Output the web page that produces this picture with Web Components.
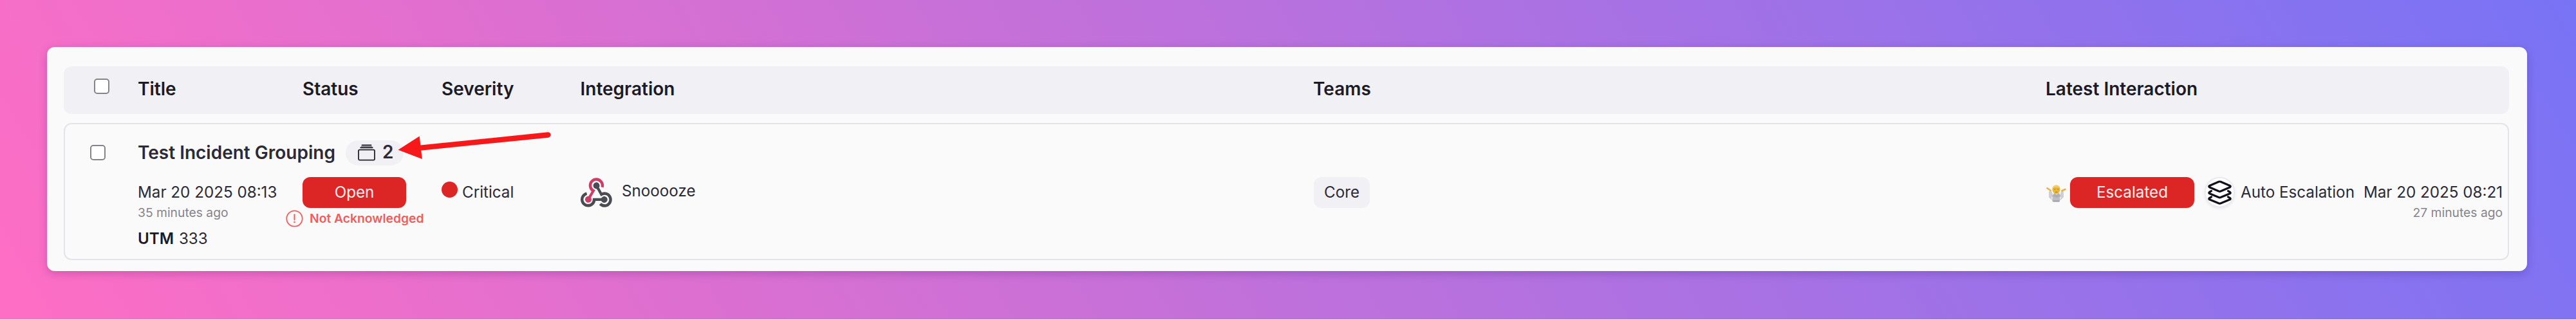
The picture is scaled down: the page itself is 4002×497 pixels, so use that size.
<!DOCTYPE html>
<html lang="en">
<head>
<meta charset="utf-8">
<title>Incidents</title>
<style>
html,body{margin:0;padding:0}
body{width:4002px;height:497px;overflow:hidden;background:#fbf3fb;font-family:Inter,"Liberation Sans",sans-serif;color:#1b1a25}
</style>
</head>
<body>
<incident-board></incident-board>
<script>
const define = (name, html) => customElements.define(name, class extends HTMLElement {
  constructor() {
    super();
    this.attachShadow({ mode: 'open' }).innerHTML = html;
  }
});

define('check-box', `<style>
:host{display:block;box-sizing:border-box;width:24px;height:24px;border:2px solid #85848b;border-radius:5px;background:#fff}
</style>`);

define('column-title', `<style>
:host{display:block;font-size:28px;font-weight:600;line-height:34px;white-space:nowrap}
</style><slot></slot>`);

define('status-pill', `<style>
:host{display:flex;align-items:center;justify-content:center;box-sizing:border-box;height:48px;border-radius:12px;background:#dc2626;color:#fdf0f0;font-size:24.2px;line-height:48px;white-space:nowrap}
:host([muted]){background:#f1f0f5;color:#2b2a36}
</style><slot></slot>`);

define('alert-note', `<style>
:host{display:flex;align-items:center;gap:10.5px;height:27px;color:#f45b5b;font-size:19.3px;font-weight:600;white-space:nowrap;line-height:25px}
svg{display:block;flex:none}
span{padding-bottom:1px}
</style><svg width="27" height="27" viewBox="0 0 27 27"><circle cx="13.5" cy="13.5" r="12.2" fill="none" stroke="#f45b5b" stroke-width="1.8"/><path d="M13.5 7.300v8.200" stroke="#f45b5b" stroke-width="2" stroke-linecap="round"/><circle cx="13.5" cy="19" r="1.3" fill="#f45b5b"/></svg><span><slot></slot></span>`);

define('group-count', `<style>
:host{display:flex;align-items:center;box-sizing:border-box;width:90px;height:39px;padding-left:19px;gap:11px;border-radius:20px;background:#f1f0f5;font-size:28px;font-weight:600;line-height:37px}
svg{display:block;margin-top:-1px}
span{padding-bottom:2px}
</style><svg width="27" height="26" viewBox="0 0 27 26" fill="none" stroke="#24232e"><path d="M6.500 1.5H20.500M4.300 5.300H22.700" stroke-width="1.9" stroke-linecap="round"/><path d="M5 3.4H22" stroke-width="1.1" stroke="#85848d"/><rect x="1" y="8.6" width="25" height="16" rx="1.8" stroke-width="1.8"/></svg><span><slot></slot></span>`);

define('webhook-icon', `<style>:host{display:block;width:49px;height:46px}svg{display:block}</style>
<svg width="49" height="46" viewBox="0 0 256 239"><path fill="#cc3d68" d="M119.54 100.503c-10.61 17.836-20.775 35.108-31.152 52.25-2.665 4.401-3.984 7.986-1.855 13.58 5.878 15.454-2.414 30.493-17.998 34.575-14.697 3.851-29.016-5.808-31.932-21.543-2.584-13.927 8.224-27.58 23.58-29.757 1.286-.184 2.6-.205 4.762-.367l23.358-39.168C73.612 95.465 64.868 78.39 66.803 57.23c1.368-14.957 7.25-27.883 18-38.477 20.59-20.288 52.002-23.573 76.246-8.001 23.284 14.958 33.948 44.094 24.858 69.031-6.854-1.858-13.756-3.732-21.343-5.79 2.854-13.865.743-26.315-8.608-36.981-6.178-7.042-14.106-10.733-23.12-12.093-18.072-2.73-35.815 8.88-41.08 26.618-5.976 20.13 3.069 36.575 27.784 48.967z"/><path fill="#4b4b53" d="M149.841 79.41c7.475 13.187 15.065 26.573 22.587 39.836 38.02-11.763 66.686 9.284 76.97 31.817 12.422 27.219 3.93 59.457-20.465 76.25-25.04 17.238-56.707 14.293-78.892-7.851 5.654-4.733 11.336-9.487 17.407-14.566 21.912 14.192 41.077 13.524 55.305-3.282 12.133-14.337 11.87-35.714-.615-49.75-14.408-16.197-33.707-16.691-57.035-1.143-9.677-17.168-19.522-34.199-28.893-51.491-3.16-5.828-6.648-9.21-13.77-10.443-11.893-2.062-19.571-12.275-20.032-23.717-.453-11.316 6.214-21.545 16.634-25.53 10.322-3.949 22.435-.762 29.378 8.014 5.674 7.17 7.477 15.24 4.491 24.083-.83 2.466-1.905 4.852-3.07 7.774z"/><path fill="#4b4b53" d="M167.707 187.21h-45.77c-4.387 18.044-13.863 32.612-30.19 41.876-12.693 7.2-26.373 9.641-40.933 7.29-26.808-4.323-48.728-28.456-50.658-55.63-2.184-30.784 18.975-58.147 47.178-64.293 1.947 7.071 3.915 14.21 5.862 21.264-25.876 13.202-34.832 29.836-27.59 50.636 6.375 18.304 24.484 28.337 44.147 24.457 20.08-3.962 30.204-20.65 28.968-47.432 19.036 0 38.088-.197 57.126.097 7.434.117 13.173-.654 18.773-7.208 9.22-10.784 26.191-9.811 36.121.374 10.148 10.409 9.662 27.157-1.077 37.127-10.361 9.62-26.73 9.106-36.424-1.26-1.992-2.136-3.562-4.673-5.533-7.298z"/></svg>`);

define('shrug-icon', `<style>:host{display:block;width:31px;height:28px}svg{display:block}</style>
<svg width="31" height="28" viewBox="0 0 31 28"><path d="M4 11.500 8 10 11 17.500 12 13.500h8l1 4L23.500 10l3.500 1.500L27 20l-4 4.500H8.500l-4.500-4Z" fill="#cfcfd3"/><path d="M8.500 17h13.500L21 27H9.500Z" fill="#bdbdc3"/><path d="M12 14l4 3 4-3 2 5-6 2-6-2Z" fill="#aeaeb4"/><path d="M10.500 26.500h10" stroke="#9b9ba3" stroke-width="2"/><path d="M9 19.500v4M22 19.500v4" stroke="#ececef" stroke-width="1.500"/><path d="M1.500 6.300 6.500 9.800M29.500 8 24.500 10.300" stroke="#eab045" stroke-width="2.600" stroke-linecap="round"/><ellipse cx="15.500" cy="8.300" rx="6" ry="6.800" fill="#e9b735"/><path d="M9.700 6C10 .8 20.500 0 21.400 6 18 4.500 13 4.500 9.700 6Z" fill="#f2cd68"/><path d="M12 8h2.500M17 8h2.500M14 12.300h3.500" stroke="#b98418" stroke-width="1.200"/></svg>`);

define('layers-icon', `<style>
:host{display:block;width:47px;height:47px;border-radius:50%;background:#fff;box-shadow:inset 0 0 0 1.5px #e6e6ee,0 2px 4px rgba(60,50,120,.1)}
svg{display:block}
</style><svg width="47" height="47" viewBox="0 0 47 47" fill="#fff" stroke="#12111b" stroke-width="3.200" stroke-linejoin="round" stroke-linecap="round"><path d="M10.500 30.800 7.500 32.600Q6 33.800 7.500 34.800L22 40.800Q23.500 41.400 25 40.800L39.500 34.800Q41 33.800 39.500 32.600L36.500 30.800"/><path d="M10.500 21.600 7.500 23.400Q6 24.600 7.500 25.600L22 31.600Q23.500 32.200 25 31.600L39.500 25.600Q41 24.600 39.500 23.400L36.500 21.600"/><path d="M22 7.300Q23.500 6.700 25 7.300L39.500 13.500Q41 14.600 39.500 15.700L25 22Q23.500 22.600 22 22L7.500 15.700Q6 14.600 7.500 13.500Z"/></svg>`);

define('table-head', `<style>
:host{display:grid;grid-template-columns:var(--cols);align-items:center;box-sizing:border-box;height:74px;padding-bottom:4px;border-radius:12px;background:#f1f0f5}
check-box{margin:-8px 0 0 47px}
</style><check-box></check-box>
<column-title>Title</column-title><column-title>Status</column-title><column-title>Severity</column-title><column-title>Integration</column-title><column-title>Teams</column-title><column-title>Latest Interaction</column-title>`);

define('incident-row', `<style>
:host{display:grid;grid-template-columns:var(--cols);grid-template-rows:39px 1fr;row-gap:18px;box-sizing:border-box;height:213px;padding-top:25px;border:2px solid #e4e3ea;border-radius:12px;font-size:24.2px;line-height:48px;white-space:nowrap;color:#2b2a36}
check-box{margin:7px 0 0 39px}
.head{grid-column:2/-1;display:flex;align-items:center;gap:16px;margin-left:-2px}
.head column-title{padding-bottom:1px}
.when,.status,.sev,.integ,.teams,.last{margin-left:-2px;min-width:0}
.when,.status{display:flex;flex-direction:column}
.when{grid-column:2}
small{display:block;font-size:19.3px;line-height:18px;margin-top:-2px;color:#85848d}
.utm{line-height:30px;margin-top:17px;word-spacing:1px}
b{font-weight:600;color:#1b1a25}
.status{width:162px;align-items:center}
.status status-pill{width:161px;align-self:flex-start}
alert-note{margin-top:3px}
.sev{display:flex;align-items:flex-start;gap:7px}
.dot{width:25px;height:25px;border-radius:50%;background:#dc2626;margin-top:7px;flex:none}
.integ{display:flex;gap:15px;align-items:flex-start;line-height:43px}
webhook-icon{margin:1px 0 0 .5px}
.teams status-pill{width:87px;margin-left:1px}
.last{display:flex;align-items:flex-start}
shrug-icon{margin:11px 6px 0 1px}
.last status-pill{width:193px;margin-right:16px}
layers-icon{margin-right:9px}
.stamp{margin-left:14px;text-align:right}
</style>
<check-box></check-box>
<div class="head"><column-title>Test Incident Grouping</column-title><group-count>2</group-count></div>
<div class="when"><div>Mar 20 2025 08:13</div><small>35 minutes ago</small><div class="utm"><b>UTM</b> 333</div></div>
<div class="status"><status-pill>Open</status-pill><alert-note>Not Acknowledged</alert-note></div>
<div class="sev"><span class="dot"></span><span>Critical</span></div>
<div class="integ"><webhook-icon></webhook-icon><span>Snooooze</span></div>
<div class="teams"><status-pill muted>Core</status-pill></div>
<div class="last"><shrug-icon></shrug-icon><status-pill>Escalated</status-pill><layers-icon></layers-icon><span>Auto Escalation</span><div class="stamp"><div>Mar 20 2025 08:21</div><small>27 minutes ago</small></div></div>`);

define('pointer-arrow', `<style>:host{position:absolute;left:610px;top:200px;width:250px;height:55px}svg{display:block}</style>
<svg width="250" height="55" viewBox="610 200 250 55"><path d="M651 229.800 851.500 209.500" stroke="#f71919" stroke-width="8.300" stroke-linecap="round"/><path d="M618.500 232.800 651.700 211.600 655.800 247Z" fill="#f71919"/></svg>`);

define('incident-board', `<style>
:host{display:block;box-sizing:border-box;width:4002px;height:496px;padding:73px 76px 0 73px;background:linear-gradient(60deg,#ff6ec4,#7873f5);--cols:115px 256px 216px 215.5px 1138.5px 1138px 1fr}
.card{box-sizing:border-box;height:348px;padding:30px 28px 0 26px;border-radius:12px;background:#fafafa;box-shadow:0 4px 14px rgba(40,10,80,.22);display:flex;flex-direction:column;gap:14px}
</style><div class="card"><table-head></table-head><incident-row></incident-row></div><pointer-arrow></pointer-arrow>`);
</script>
</body>
</html>
